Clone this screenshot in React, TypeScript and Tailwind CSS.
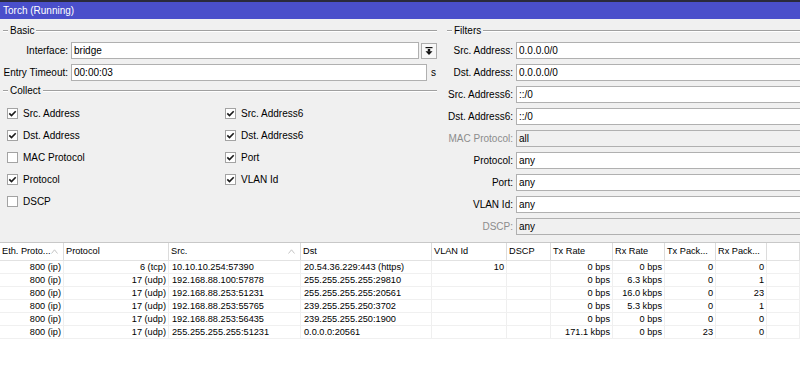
import React from 'react';

const font = "font-['Liberation_Sans',Arial,sans-serif]";

function Legend({ title }: { title: string }) {
  return (
    <div className="flex items-center h-[12px]">
      <span className="w-[5px] h-[2px] border-t border-[#a0a0a0] border-b border-b-white" />
      <span className="px-[2px] leading-none">{title}</span>
      <span className="flex-1 h-[2px] border-t border-[#a0a0a0] border-b border-b-white" />
    </div>
  );
}

function Check({ checked, label }: { checked: boolean; label: string }) {
  return (
    <div className="flex items-center h-[22px] gap-[5px]">
      <span className="w-[11px] h-[11px] border border-[#a3a3a3] bg-white flex items-center justify-center">
        {checked && (
          <svg width="9" height="9" viewBox="0 0 9 9">
            <path d="M1.3 4.4 L3.5 6.6 L7.7 2.2" stroke="#1a1a1a" strokeWidth="1.6" fill="none" />
          </svg>
        )}
      </span>
      <span>{label}</span>
    </div>
  );
}

function FilterRow({ label, value, disabled }: { label: string; value: string; disabled?: boolean }) {
  return (
    <div className="flex items-center h-[17px] gap-[3px]">
      <span className={`w-[73px] text-right whitespace-nowrap ${disabled ? 'text-[#8c8c8c]' : ''}`}>{label}</span>
      <div className={`flex-1 h-[17px] border border-r-0 border-[#b0b0b0] flex items-center pl-[2px] ${disabled ? 'bg-[#f0f0f0]' : 'bg-white'}`}>
        {value}
      </div>
    </div>
  );
}

const cols = [
  { name: 'Eth. Proto...', w: 'w-[64px]', align: 'text-right', sort: true },
  { name: 'Protocol', w: 'w-[105px]', align: 'text-right' },
  { name: 'Src.', w: 'w-[132px]', align: 'text-left', sort: true },
  { name: 'Dst', w: 'w-[131px]', align: 'text-left' },
  { name: 'VLAN Id', w: 'w-[75px]', align: 'text-right' },
  { name: 'DSCP', w: 'w-[44px]', align: 'text-right' },
  { name: 'Tx Rate', w: 'w-[62px]', align: 'text-right' },
  { name: 'Rx Rate', w: 'w-[52px]', align: 'text-right' },
  { name: 'Tx Pack...', w: 'w-[51px]', align: 'text-right' },
  { name: 'Rx Pack...', w: 'w-[51px]', align: 'text-right' },
  { name: '', w: 'flex-1', align: 'text-left' },
];

const rows = [
  ['800 (ip)', '6 (tcp)', '10.10.10.254:57390', '20.54.36.229:443 (https)', '10', '', '0 bps', '0 bps', '0', '0', ''],
  ['800 (ip)', '17 (udp)', '192.168.88.100:57878', '255.255.255.255:29810', '', '', '0 bps', '6.3 kbps', '0', '1', ''],
  ['800 (ip)', '17 (udp)', '192.168.88.253:51231', '255.255.255.255:20561', '', '', '0 bps', '16.0 kbps', '0', '23', ''],
  ['800 (ip)', '17 (udp)', '192.168.88.253:55765', '239.255.255.250:3702', '', '', '0 bps', '5.3 kbps', '0', '1', ''],
  ['800 (ip)', '17 (udp)', '192.168.88.253:56435', '239.255.255.250:1900', '', '', '0 bps', '0 bps', '0', '0', ''],
  ['800 (ip)', '17 (udp)', '255.255.255.255:51231', '0.0.0.0:20561', '', '', '171.1 kbps', '0 bps', '23', '0', ''],
];

export default function App() {
  return (
    <div className={`w-[800px] h-[370px] bg-[#f0f0f0] ${font} text-[10px] text-black overflow-hidden flex flex-col`}>
      {/* title bar */}
      <div className="h-[19px] shrink-0 bg-[#4a4fcb] border-t-2 border-[#2a2a3c] text-white text-[10px] pl-[3px] flex items-center">
        Torch (Running)
      </div>

      {/* form */}
      <div className="flex h-[223px] shrink-0 pt-[6px]">
        {/* left */}
        <div className="w-[440px] pl-[3px] pr-[3px] flex flex-col">
          <Legend title="Basic" />
          <div className="flex items-center h-[17px] mt-[5px] gap-[3px]">
            <span className="w-[65px] text-right">Interface:</span>
            <div className="w-[348px] h-[17px] border border-[#b0b0b0] bg-white flex items-center pl-[2px]">bridge</div>
            <div className="ml-[-1px] w-[16px] h-[16px] border border-[#adadad] bg-[#f7f7f7] flex items-center justify-center">
              <svg width="10" height="10" viewBox="0 0 10 10">
                <rect x="1.5" y="1" width="7" height="1.2" fill="#111" />
                <rect x="3.8" y="3" width="2.4" height="2.5" fill="#111" />
                <path d="M1.5 5.3 L8.5 5.3 L5 9 Z" fill="#111" />
              </svg>
            </div>
          </div>
          <div className="flex items-center h-[17px] mt-[5px] gap-[3px]">
            <span className="w-[65px] text-right whitespace-nowrap">Entry Timeout:</span>
            <div className="w-[356px] h-[17px] border border-[#b0b0b0] bg-white flex items-center pl-[2px]">00:00:03</div>
            <span className="ml-[1px]">s</span>
          </div>
          <div className="mt-[4px]">
            <Legend title="Collect" />
          </div>
          <div className="grid grid-cols-[218px_1fr] pl-[4px] mt-[5px]">
            <div className="flex flex-col">
              <Check checked label="Src. Address" />
              <Check checked label="Dst. Address" />
              <Check checked={false} label="MAC Protocol" />
              <Check checked label="Protocol" />
              <Check checked={false} label="DSCP" />
            </div>
            <div className="flex flex-col">
              <Check checked label="Src. Address6" />
              <Check checked label="Dst. Address6" />
              <Check checked label="Port" />
              <Check checked label="VLAN Id" />
            </div>
          </div>
        </div>

        {/* right */}
        <div className="flex-1 pl-[7px] flex flex-col">
          <Legend title="Filters" />
          <div className="ml-[-7px] mt-[5px] flex flex-col gap-[5px]">
            <FilterRow label="Src. Address:" value="0.0.0.0/0" />
            <FilterRow label="Dst. Address:" value="0.0.0.0/0" />
            <FilterRow label="Src. Address6:" value="::/0" />
            <FilterRow label="Dst. Address6:" value="::/0" />
            <FilterRow label="MAC Protocol:" value="all" disabled />
            <FilterRow label="Protocol:" value="any" />
            <FilterRow label="Port:" value="any" />
            <FilterRow label="VLAN Id:" value="any" />
            <FilterRow label="DSCP:" value="any" disabled />
          </div>
        </div>
      </div>

      {/* table */}
      <div className="flex-1 bg-white border-t border-[#c8c8c8] text-[9.2px] flex flex-col">
        <div className="flex h-[18px] shrink-0 border-b border-[#e2e2e2]">
          {cols.map((c, i) => (
            <div key={i} className={`${c.w} shrink-0 border-r border-[#dcdcdc] pl-[2px] flex items-center relative whitespace-nowrap overflow-hidden`}>
              {c.name}
              {c.sort && (
                <svg className="absolute right-[5px] top-[6px]" width="7" height="5" viewBox="0 0 7 5">
                  <path d="M0.5 4.5 L3.5 0.8 L6.5 4.5" stroke="#c4c4c4" strokeWidth="1" fill="none" />
                </svg>
              )}
            </div>
          ))}
        </div>
        {rows.map((r, ri) => (
          <div key={ri} className="flex h-[13px] shrink-0 border-b border-[#f0f0f0]">
            {r.map((v, ci) => (
              <div
                key={ci}
                className={`${cols[ci].w} shrink-0 border-r border-[#efefef] ${cols[ci].align} ${cols[ci].align === 'text-right' ? 'pr-[2px]' : 'pl-[3px]'} leading-[12px] whitespace-nowrap overflow-hidden`}
              >
                {v}
              </div>
            ))}
          </div>
        ))}
      </div>
    </div>
  );
}
